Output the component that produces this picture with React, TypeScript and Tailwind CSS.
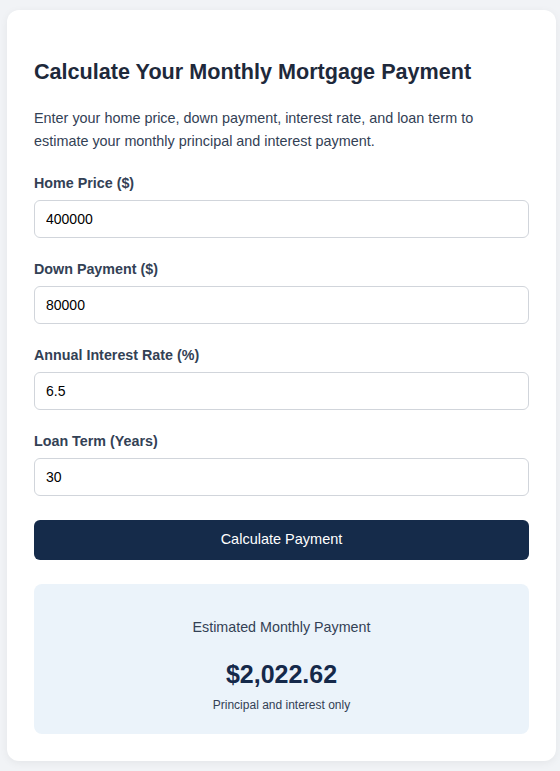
import { useState } from 'react';

const fields = [
  { label: 'Home Price ($)', key: 'price' },
  { label: 'Down Payment ($)', key: 'down' },
  { label: 'Annual Interest Rate (%)', key: 'rate' },
  { label: 'Loan Term (Years)', key: 'term' },
] as const;

type Key = (typeof fields)[number]['key'];

const App = () => {
  const [values, setValues] = useState<Record<Key, string>>({
    price: '400000',
    down: '80000',
    rate: '6.5',
    term: '30',
  });
  const [payment, setPayment] = useState(2022.62);

  const calculate = () => {
    const p = Number(values.price) - Number(values.down);
    const r = Number(values.rate) / 100 / 12;
    const n = Number(values.term) * 12;
    const m = r === 0 ? p / n : (p * r) / (1 - Math.pow(1 + r, -n));
    setPayment(Math.round(m * 100) / 100);
  };

  return (
    <div className="min-h-[771px] bg-[#f1f3f6] pl-[7px] pr-[4px] pt-[10px] pb-[10px] [font-family:'Liberation_Sans',Arial,sans-serif]">
      <div className="bg-white rounded-xl shadow-[0_2px_8px_rgba(0,0,0,0.06)] px-[27px] pt-[48px] pb-[27px]">
        <h2 className="text-[21.6px] leading-[28px] font-bold text-[#1e293b]">
          Calculate Your Monthly Mortgage Payment
        </h2>
        <p className="mt-[21px] text-[14.4px] leading-[23px] text-[#334155]">
          Enter your home price, down payment, interest rate, and loan term to estimate your monthly principal and interest payment.
        </p>

        <div className="mt-[20px] flex flex-col gap-[21px]">
          {fields.map((f) => (
            <div key={f.key} className="flex flex-col gap-[7px]">
              <label className="text-[14.3px] leading-[20px] font-bold text-[#334155]">{f.label}</label>
              <input
                value={values[f.key]}
                onChange={(e) => setValues({ ...values, [f.key]: e.target.value })}
                className="h-[38px] w-full rounded-md border border-[#d1d5db] bg-white px-[11px] text-[14px] text-black outline-none"
              />
            </div>
          ))}
        </div>

        <button
          onClick={calculate}
          className="mt-[24px] h-[40px] w-full rounded-md bg-[#152b4a] text-[14.5px] font-medium text-white"
        >
          Calculate Payment
        </button>

        <div className="mt-[24px] rounded-lg bg-[#ebf3fa] h-[150px] flex flex-col items-center pt-[33px]">
          <div className="text-[14.3px] leading-[20px] text-[#334155]">Estimated Monthly Payment</div>
          <div className="mt-[21px] text-[25px] leading-[32px] font-bold text-[#15294a]">
            ${payment.toLocaleString('en-US', { minimumFractionDigits: 2, maximumFractionDigits: 2 })}
          </div>
          <div className="mt-[7px] text-[12px] leading-[16px] text-[#334155]">Principal and interest only</div>
        </div>
      </div>
    </div>
  );
};

export default App;
